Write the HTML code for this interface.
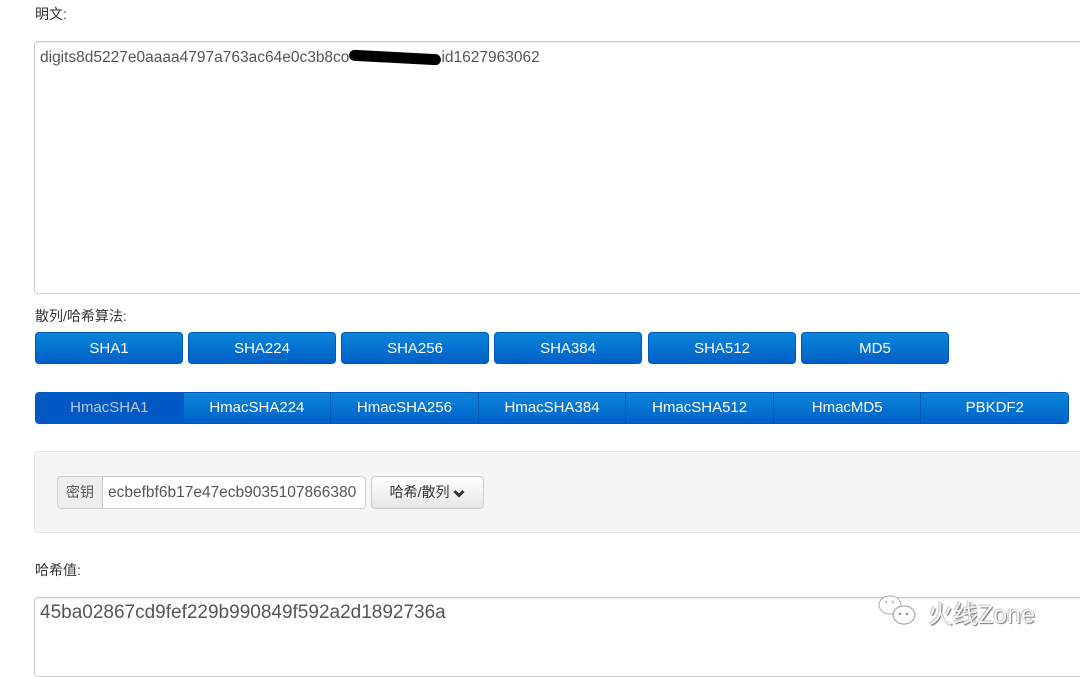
<!DOCTYPE html>
<html><head><meta charset="utf-8"><style>
body{margin:0;width:1080px;height:660px;background:#fff;overflow:hidden;position:relative;font-family:"Liberation Sans","Noto Sans CJK SC",sans-serif;color:#333;font-size:14px}
.a{position:absolute}
.lbl{font-size:14px;color:#333}
.ta{border:1px solid #ccc;border-radius:4px;box-shadow:inset 0 1px 1px rgba(0,0,0,.075);background:#fff;box-sizing:border-box}
.btn{position:absolute;top:332px;height:32px;width:148px;border-radius:4px;background:linear-gradient(#0a84d8,#0060c8);color:#fff;text-align:center;line-height:32px;font-size:15px;box-sizing:border-box;border:1px solid #0058b8}
.grp{position:absolute;top:392px;left:35px;width:1034px;height:32px;border-radius:4px;overflow:hidden;display:flex;border:1px solid #0058b8;box-sizing:border-box}
.grp div{flex:1;background:linear-gradient(#0a84d8,#0062c8);color:#fff;text-align:center;line-height:30px;font-size:15px;border-left:1px solid #0058b0}
.grp div.on{background:#0058c4;color:#b8c8e8;border-left:none}
</style></head><body>
<div class="a lbl" style="left:35px;top:4px">明文:</div>
<div class="a ta" style="left:34px;top:41px;width:1060px;height:253px"></div>
<div class="a" style="left:40px;top:49px;font-size:15.5px;color:#555;white-space:nowrap">digits8d5227e0aaaa4797a763ac64e0c3b8co<span style="display:inline-block;width:92px;height:11px;background:#000;border-radius:6px;vertical-align:middle;transform:rotate(3deg)"></span>id1627963062</div>
<div class="a lbl" style="left:35px;top:306px">散列/哈希算法:</div>
<div class="btn" style="left:35px">SHA1</div>
<div class="btn" style="left:188px">SHA224</div>
<div class="btn" style="left:341px">SHA256</div>
<div class="btn" style="left:494px">SHA384</div>
<div class="btn" style="left:648px">SHA512</div>
<div class="btn" style="left:801px">MD5</div>
<div class="grp"><div class="on">HmacSHA1</div><div>HmacSHA224</div><div>HmacSHA256</div><div>HmacSHA384</div><div>HmacSHA512</div><div>HmacMD5</div><div>PBKDF2</div></div>
<div class="a" style="left:34px;top:451px;width:1060px;height:82px;background:#f5f5f5;border:1px solid #e3e3e3;border-radius:4px;box-sizing:border-box"></div>
<div class="a" style="left:57px;top:476px;width:46px;height:33px;background:#eee;border:1px solid #ccc;border-radius:4px 0 0 4px;box-sizing:border-box;text-align:center;line-height:31px;color:#555">密钥</div>
<div class="a" style="left:102px;top:476px;width:264px;height:33px;background:#fff;border:1px solid #ccc;border-radius:0 4px 4px 0;box-sizing:border-box;line-height:31px;padding-left:5px;color:#555;font-size:15.5px;white-space:nowrap;overflow:hidden">ecbefbf6b17e47ecb9035107866380</div>
<div class="a" style="left:371px;top:476px;width:113px;height:33px;background:linear-gradient(#fff,#e6e6e6);border:1px solid #ccc;border-radius:4px;box-sizing:border-box;line-height:31px;text-align:center;color:#333">哈希/散列 <svg width="12" height="9" viewBox="0 0 12 9" style="vertical-align:middle"><path d="M1.5 2 L6 6.5 L10.5 2" fill="none" stroke="#333" stroke-width="3"/></svg></div>
<div class="a lbl" style="left:35px;top:560px">哈希值:</div>
<div class="a ta" style="left:34px;top:597px;width:1060px;height:80px"></div>
<div class="a" style="left:40px;top:602px;font-size:19px;color:#555">45ba02867cd9fef229b990849f592a2d1892736a</div>
<div class="a" style="left:877px;top:593px;width:42px;height:36px">
<svg width="42" height="36" viewBox="0 0 42 36"><ellipse cx="13" cy="12" rx="11" ry="9" fill="#fff" stroke="#aaa"/><ellipse cx="27" cy="22" rx="11" ry="9" fill="#fff" stroke="#999"/><circle cx="23" cy="21" r="1.2" fill="#888"/><circle cx="30" cy="21" r="1.2" fill="#888"/><circle cx="9" cy="9" r="1" fill="#aaa"/><circle cx="16" cy="9" r="1" fill="#aaa"/></svg></div>
<div class="a" style="left:928px;top:595px;font-size:25px;color:#f4f4f4;text-shadow:1px 1px 1px #777,-1px -1px 0 #ccc">火线Zone</div>
</body></html>
